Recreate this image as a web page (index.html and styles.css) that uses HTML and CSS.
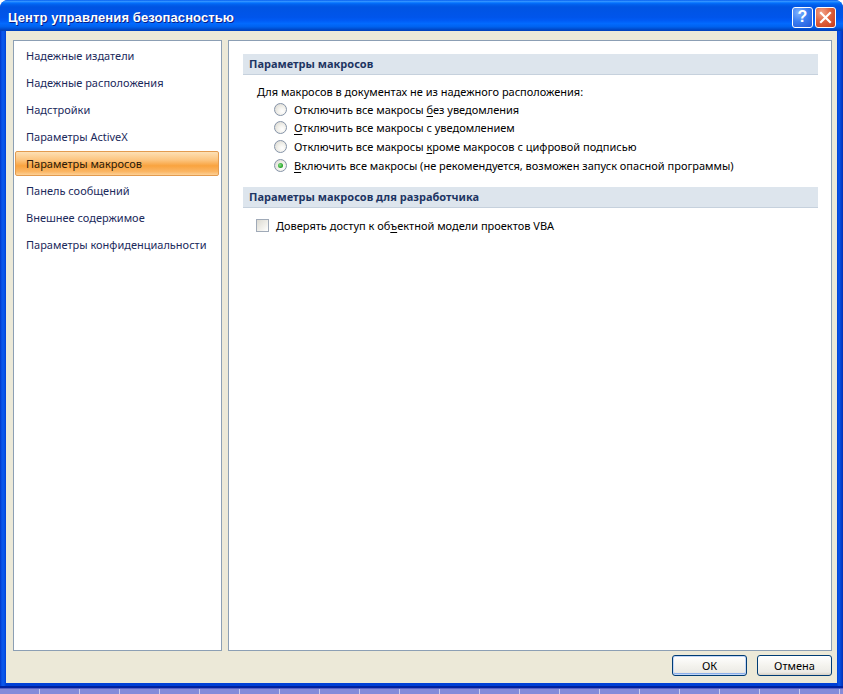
FILE: index.html
```html
<!DOCTYPE html>
<html lang="ru">
<head>
<meta charset="utf-8">
<title>Центр управления безопасностью</title>
<link rel="stylesheet" href="styles.css">
</head>
<body>
<div class="window">
  <div class="titlebar">
    <span class="title">Центр управления безопасностью</span>
    <div class="caption-btns">
      <span class="cbtn help">?</span>
      <span class="cbtn close">
        <svg width="13" height="13" viewBox="0 0 13 13"><path d="M2 2 L11 11 M11 2 L2 11" stroke="#fff" stroke-width="2.2" stroke-linecap="square"/></svg>
      </span>
    </div>
  </div>
  <div class="client">
    <div class="panes">
      <nav class="nav">
        <div class="nav-item">Надежные издатели</div>
        <div class="nav-item">Надежные расположения</div>
        <div class="nav-item">Надстройки</div>
        <div class="nav-item">Параметры ActiveX</div>
        <div class="nav-item selected">Параметры макросов</div>
        <div class="nav-item">Панель сообщений</div>
        <div class="nav-item">Внешнее содержимое</div>
        <div class="nav-item">Параметры конфиденциальности</div>
      </nav>
      <main class="content">
        <div class="section-head">Параметры макросов</div>
        <div class="intro">Для макросов в документах не из надежного расположения:</div>
        <div class="radios">
          <div class="opt"><span class="radio"></span><span>Отключить все макросы <u>б</u>ез уведомления</span></div>
          <div class="opt"><span class="radio"></span><span><u>О</u>тключить все макросы с уведомлением</span></div>
          <div class="opt"><span class="radio"></span><span>Отключить все макросы <u>к</u>роме макросов с цифровой подписью</span></div>
          <div class="opt"><span class="radio checked"></span><span><u>В</u>ключить все макросы (не рекомендуется, возможен запуск опасной программы)</span></div>
        </div>
        <div class="section-head second">Параметры макросов для разработчика</div>
        <div class="check-row"><span class="checkbox"></span><span>Доверять доступ к об<u>ъ</u>ектной модели проектов VBA</span></div>
      </main>
    </div>
    <div class="footer">
      <button class="btn default">ОК</button>
      <button class="btn">Отмена</button>
    </div>
  </div>
</div>
<div class="sheet-strip"></div>
</body>
</html>
```

FILE: styles.css
```css
html, body {
  margin: 0;
  padding: 0;
}
body {
  width: 843px;
  height: 694px;
  overflow: hidden;
  background: #ffffff;
  font-family: "Noto Sans", "Open Sans", sans-serif;
  font-size: 11px;
  display: flex;
  flex-direction: column;
}
.window {
  height: 688px;
  display: flex;
  flex-direction: column;
  border-radius: 8px 8px 0 0;
  box-sizing: border-box;
  padding: 0 6px 5px 6px;
  background: linear-gradient(to right, #0034c8 0, #0a56ea 2px, #0a56ea 4px, #0040d6 6px, #0040d6 calc(100% - 6px), #0a56ea calc(100% - 4px), #0031b8 100%);
  box-shadow: inset 0 -2px 0 #0022a0;
}
.titlebar {
  height: 31px;
  margin: 0 -6px;
  padding: 0 8px;
  border-radius: 8px 8px 0 0;
  display: flex;
  align-items: center;
  justify-content: space-between;
  background: linear-gradient(to bottom, #0058ee 0%, #3593ff 4%, #288eff 6%, #127dff 8%, #036ffc 10%, #0262ee 14%, #0057e5 20%, #0054e3 24%, #0055eb 56%, #005bf5 66%, #026afe 76%, #0062ef 86%, #0052d6 92%, #0046c4 96%, #0040bb 100%);
}
.title {
  color: #ffffff;
  font-family: "Liberation Sans", sans-serif;
  font-weight: bold;
  font-size: 13px;
  letter-spacing: 0.1px;
  text-shadow: 1px 1px 0 #0a1f86;
  padding-top: 3px;
  white-space: nowrap;
}
.caption-btns {
  display: flex;
  gap: 2px;
  padding-top: 3px;
  margin-right: -1px;
}
.cbtn {
  width: 19px;
  height: 19px;
  border: 1px solid #ffffff;
  border-radius: 3px;
  display: flex;
  align-items: center;
  justify-content: center;
  color: #fff;
}
.help {
  background: radial-gradient(circle at 30% 25%, #7fb2ff 0, #3b7ff2 45%, #2257d8 100%);
  font-family: "Liberation Sans", sans-serif;
  font-weight: bold;
  font-size: 16px;
}
.close {
  background: radial-gradient(circle at 30% 25%, #f1a48b 0, #e0633f 45%, #c43a18 100%);
}
.client {
  flex: 1;
  background: #ece9d8;
  display: flex;
  flex-direction: column;
  padding: 9px 5px 0 7px;
}
.panes {
  flex: 1;
  display: flex;
  gap: 6px;
}
.nav {
  width: 209px;
  flex: none;
  box-sizing: border-box;
  background: #fff;
  border: 1px solid #8c9fb4;
  padding: 2px 2px 0 1px;
  display: flex;
  flex-direction: column;
  gap: 2px;
}
.nav-item {
  height: 25px;
  line-height: 23px;
  padding-left: 10px;
  color: #1b2a5c;
  border: 1px solid transparent;
  box-sizing: border-box;
  border-radius: 2px;
  white-space: nowrap;
}
.nav-item.selected {
  border-color: #e39b4f;
  background: linear-gradient(to bottom, #fde0b5 0%, #fcc47e 35%, #f9a33f 60%, #fbb664 85%, #fdd197 100%);
  color: #2a1a0a;
}
.content {
  flex: 1;
  background: #fff;
  border: 1px solid #8c9fb4;
  padding: 13px 13px 0 14px;
  color: #000;
}
.section-head {
  height: 21px;
  line-height: 20px;
  padding-left: 6px;
  background: #dde5ed;
  border-bottom: 1px solid #c6d1dd;
  box-sizing: border-box;
  font-weight: bold;
  color: #1d3563;
}
.section-head.second {
  margin-top: 13px;
}
.intro {
  margin-top: 9px;
  padding-left: 14px;
  line-height: 16px;
}
.radios {
  padding-left: 31px;
}
.opt {
  height: 18.6px;
  display: flex;
  align-items: center;
  gap: 7px;
  white-space: nowrap;
}
.radio {
  width: 13px;
  height: 13px;
  box-sizing: border-box;
  border-radius: 50%;
  border: 1px solid #8593a8;
  background: radial-gradient(circle at 65% 65%, #ffffff 0, #f2f1ec 40%, #d6d4cc 100%);
  position: relative;
  flex: none;
}
.radio.checked::after {
  content: "";
  position: absolute;
  left: 3px;
  top: 3px;
  width: 5px;
  height: 5px;
  border-radius: 50%;
  background: radial-gradient(circle at 40% 40%, #8be08b 0, #2ea82e 60%, #1b7d1b 100%);
}
.check-row {
  margin-top: 8px;
  padding-left: 13px;
  height: 19px;
  display: flex;
  align-items: center;
  gap: 7px;
}
.checkbox {
  width: 13px;
  height: 13px;
  box-sizing: border-box;
  border: 1px solid #a0aab8;
  background: linear-gradient(135deg, #dcdad2 0, #f1f0eb 60%, #ffffff 100%);
  flex: none;
}
u {
  text-decoration-thickness: 1px;
  text-underline-offset: 2px;
}
.footer {
  height: 32px;
  display: flex;
  justify-content: flex-end;
  align-items: flex-start;
  padding-top: 4px;
  box-sizing: border-box;
  gap: 10px;
}
.btn {
  width: 75px;
  height: 21px;
  box-sizing: border-box;
  border: 1px solid #003c74;
  border-radius: 3px;
  background: linear-gradient(to bottom, #ffffff 0%, #f4f3ee 50%, #ecebe6 85%, #d6d0c5 100%);
  font-family: "Noto Sans", "Open Sans", sans-serif;
  font-size: 11px;
  color: #000;
  padding: 0;
  margin: 0;
}
.btn.default {
  box-shadow: inset 0 0 0 1px #c2d6f7, inset 0 -1px 0 1px #8cb0ec;
}
.sheet-strip {
  height: 6px;
  background: repeating-linear-gradient(to right, #858bd9 0, #858bd9 39px, #c9ccef 39px, #c9ccef 40px);
  border-top: 1px solid #5660c7;
  box-sizing: border-box;
}
```
